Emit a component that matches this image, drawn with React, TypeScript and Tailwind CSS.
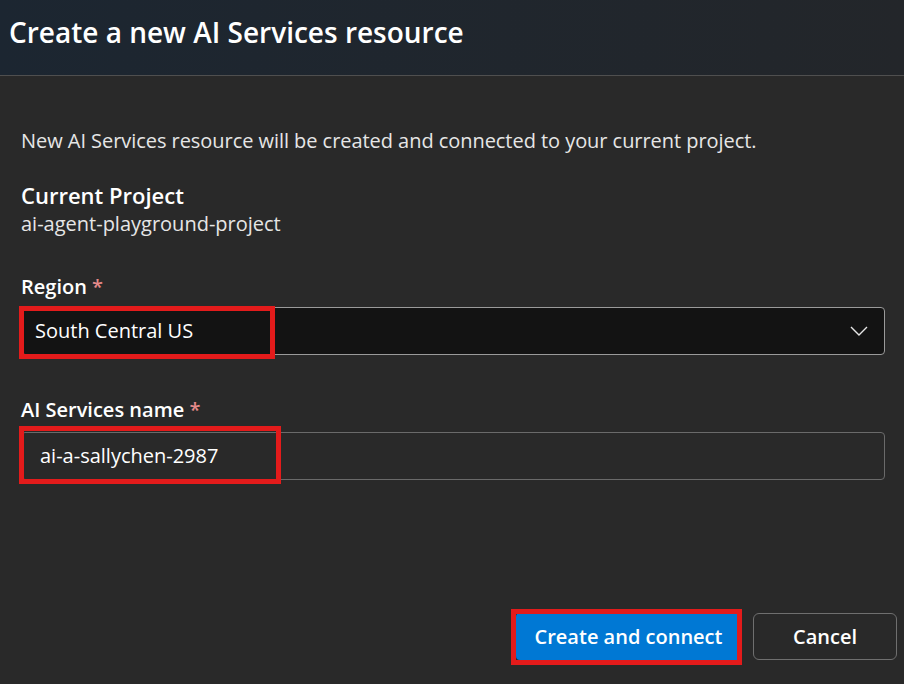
import React from 'react';

function Highlight({ className }: { className: string }) {
  return <div className={`pointer-events-none absolute border-[5px] border-[#e31b1b] ${className}`} />;
}

export default function App() {
  return (
    <div className="flex h-[684px] w-[904px] flex-col overflow-hidden bg-[#292929] font-['Open_Sans','Noto_Sans',sans-serif] text-white">
      <header className="h-[76px] shrink-0 border-b border-[#4f4f4f] bg-gradient-to-r from-[#1c2631] to-[#23262a] px-[9px] pt-[12px]">
        <h1 className="text-[28px] leading-[40px] font-semibold">Create a new AI Services resource</h1>
      </header>

      <main className="flex flex-1 flex-col pl-[21px] pr-[7px]">
        <p className="mt-[51px] text-[20px] leading-[28px] text-[#e6e6e6] tracking-[-0.05px]">
          New AI Services resource will be created and connected to your current project.
        </p>

        <h2 className="mt-[26px] text-[22px] leading-[28px] font-semibold">Current Project</h2>
        <p className="mt-[1px] text-[20px] leading-[28px] text-[#e6e6e6]">ai-agent-playground-project</p>

        <label className="mt-[35px] text-[20px] leading-[28px] font-semibold">
          Region <span className="text-[#e58a8a]">*</span>
        </label>
        <div className="relative mt-[6px] flex h-[48px] w-[864px] items-center justify-between rounded-[4px] border border-[#9a9a9a] bg-[#131313] pl-[13px] pr-[16px]">
          <span className="text-[20px]">South Central US</span>
          <svg width="18" height="10" viewBox="0 0 18 10" fill="none" stroke="#e6e6e6" strokeWidth="1.4">
            <path d="M1 1 L9 9 L17 1" />
          </svg>
          <Highlight className="-left-[3px] -top-[2px] h-[53px] w-[256px]" />
        </div>

        <label className="mt-[41px] text-[20px] leading-[28px] font-semibold">
          AI Services name <span className="text-[#e58a8a]">*</span>
        </label>
        <div className="relative mt-[8px] flex h-[48px] w-[864px] items-center rounded-[4px] border border-[#6a6a6a] bg-[#292929] pl-[18px]">
          <span className="text-[20px]">ai-a-sallychen-2987</span>
          <Highlight className="-left-[3px] -top-[7px] h-[58px] w-[262px]" />
        </div>

        <div className="mt-[133px] flex justify-end gap-[12px]">
          <div className="relative">
            <button className="h-[47px] w-[225px] rounded-[4px] bg-[#0078d4] text-[20px] font-semibold text-white">
              Create and connect
            </button>
            <Highlight className="-left-[5px] -top-[4px] h-[56px] w-[231px]" />
          </div>
          <button className="h-[47px] w-[144px] rounded-[6px] border border-[#6f6f6f] bg-[#292929] text-[20px] font-semibold text-white">
            Cancel
          </button>
        </div>
      </main>
    </div>
  );
}
